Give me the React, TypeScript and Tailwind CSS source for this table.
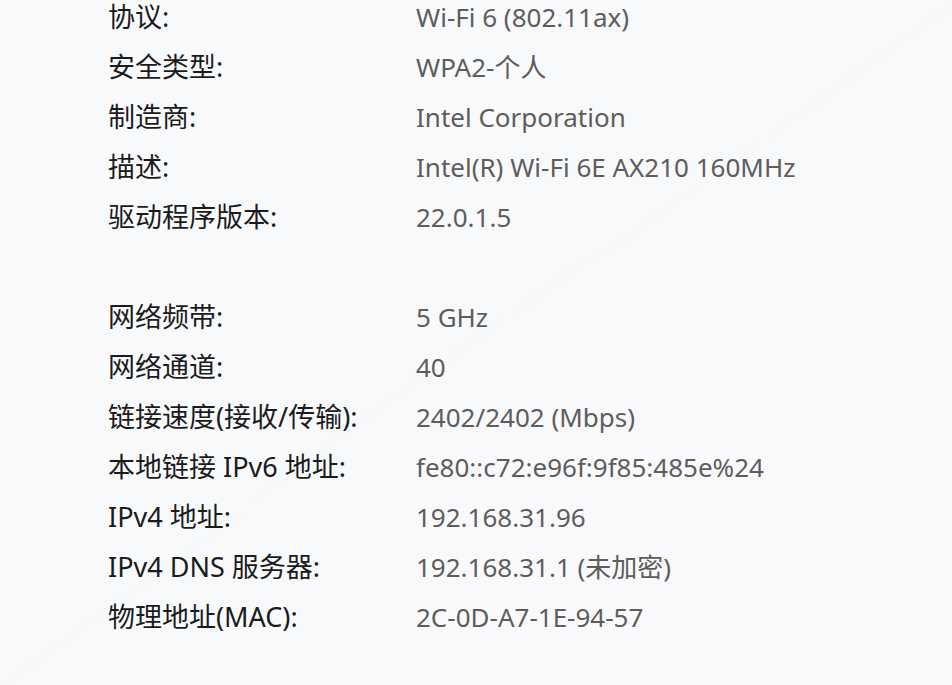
const groups: [string, string][][] = [
  [
    ["协议:", "Wi-Fi 6 (802.11ax)"],
    ["安全类型:", "WPA2-个人"],
    ["制造商:", "Intel Corporation"],
    ["描述:", "Intel(R) Wi-Fi 6E AX210 160MHz"],
    ["驱动程序版本:", "22.0.1.5"],
  ],
  [
    ["网络频带:", "5 GHz"],
    ["网络通道:", "40"],
    ["链接速度(接收/传输):", "2402/2402 (Mbps)"],
    ["本地链接 IPv6 地址:", "fe80::c72:e96f:9f85:485e%24"],
    ["IPv4 地址:", "192.168.31.96"],
    ["IPv4 DNS 服务器:", "192.168.31.1 (未加密)"],
    ["物理地址(MAC):", "2C-0D-A7-1E-94-57"],
  ],
]

const App = () => {
  return (
    <div
      className="h-[685px] w-[952px] overflow-hidden bg-gradient-to-br from-[#f9fafc] via-[#f8f9fb] to-[#fbfafc] text-[26px]"
      style={{ fontFamily: '"Noto Sans", "Noto Sans CJK SC", sans-serif' }}
    >
      <div className="flex flex-col gap-[50px] pl-[108px]">
        {groups.map((rows, i) => (
          <div key={i} className="flex flex-col">
            {rows.map(([label, value]) => (
              <div key={label} className="flex h-[50px] items-start pt-[2px]">
                <span className="w-[308px] shrink-0 text-[27px] leading-[30px] text-[#1b1b1b]">{label}</span>
                <span className="leading-[30px] text-[#5d5d5d]">{value}</span>
              </div>
            ))}
          </div>
        ))}
      </div>
    </div>
  )
}

export default App
